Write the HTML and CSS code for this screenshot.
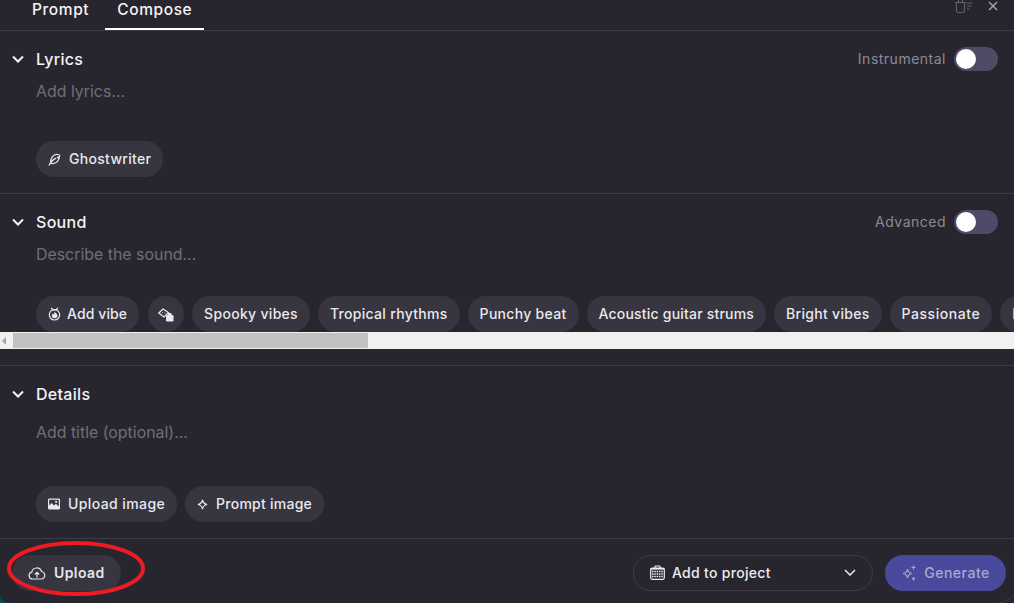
FILE: index.html
```html
<!DOCTYPE html>
<html lang="en">
<head>
<meta charset="utf-8">
<title>Compose</title>
<link rel="stylesheet" href="styles.css">
</head>
<body>
<main class="panel">
  <header class="tabs">
    <nav class="tablist">
      <span class="tab">Prompt</span>
      <span class="tab tab-active">Compose</span>
    </nav>
    <div class="tools">
      <svg class="tool-icon" width="18" height="14" viewBox="0 0 18 14" fill="none" stroke="currentColor" stroke-width="1.100"><path d="M0 2.500h11M1.200 2.500l.5 8.700q.1 1.300 1.300 1.300h5q1.200 0 1.300-1.300l.5-8.700M3.500 2.500V-1h4v3.500M12 3h5.500M12 6h4.500M12 9h2.500"/></svg>
      <svg class="close-icon" width="10" height="10" viewBox="0 0 10 10" fill="none" stroke="currentColor" stroke-width="1.400"><path d="M1 1l8 8M9 1L1 9"/></svg>
    </div>
  </header>

  <section class="section">
    <div class="head">
      <svg class="chev" width="12" height="8" viewBox="0 0 12 8" fill="none" stroke="currentColor" stroke-width="2"><path d="M1 1.500l5 5 5-5"/></svg>
      <h2 class="title">Lyrics</h2>
      <span class="switch-label">Instrumental</span>
      <span class="switch"><span class="knob"></span></span>
    </div>
    <p class="placeholder">Add lyrics...</p>
    <div class="chips">
      <span class="chip">
        <svg width="13" height="13" viewBox="0 0 14 14" fill="none" stroke="currentColor" stroke-width="1.300"><path d="M1 13.500C2.500 10 5 7.500 8.500 5.500M3 10.500C2.300 6.500 5 2 9 1.500c2-.2 3.700.7 3.700 1.700-.5 1-2 1.500-3.200 1.800 1.500.2 2.300.2 2.700.3-.8 2.700-2.700 5-5.200 5.700-1.500.5-3 .5-4-.5z"/></svg>
        Ghostwriter
      </span>
    </div>
  </section>

  <section class="section section-sound">
    <div class="head">
      <svg class="chev" width="12" height="8" viewBox="0 0 12 8" fill="none" stroke="currentColor" stroke-width="2"><path d="M1 1.500l5 5 5-5"/></svg>
      <h2 class="title">Sound</h2>
      <span class="switch-label">Advanced</span>
      <span class="switch"><span class="knob"></span></span>
    </div>
    <p class="placeholder">Describe the sound...</p>
    <div class="chips chips-scroll">
      <span class="chip chip-vibe">
        <svg width="13" height="14" viewBox="0 0 13 14" fill="none"><circle cx="6.500" cy="7.800" r="5.200" stroke="currentColor" stroke-width="1.200"/><path d="M3 1l2 1.800h3L10 1" stroke="currentColor" stroke-width="1.200"/><path d="M6.800 4.800c.2 1.200 2.700 1.800 2.700 4 0 1.500-1.300 2.500-2.900 2.500-1.700 0-2.800-1-2.800-2.500 0-1 .5-1.800 1.200-2.200 0 .7.400 1 .8 1 .5-.8.300-1.800 1-2.800z" fill="currentColor"/></svg>
        Add vibe
      </span>
      <span class="chip chip-icon">
        <svg width="16" height="14" viewBox="0 0 16 14" fill="none"><path d="M.8 5L5 1l5.500 3.500L6 9z" stroke="currentColor" stroke-width="1.200"/><rect x="8" y="7" width="7.500" height="6.500" rx="1.200" fill="currentColor"/><rect x="10" y="5" width="3.500" height="3" fill="currentColor"/><path d="M4 4.500h.8M6.500 5h.8" stroke="currentColor"/></svg>
      </span>
      <span class="chip">Spooky vibes</span>
      <span class="chip">Tropical rhythms</span>
      <span class="chip">Punchy beat</span>
      <span class="chip chip-tight">Acoustic guitar strums</span>
      <span class="chip">Bright vibes</span>
      <span class="chip chip-wide">Passionate</span>
      <span class="chip">Dreamy</span>
    </div>
    <div class="scrollbar">
      <span class="scroll-arrow"></span>
      <span class="scroll-thumb"></span>
    </div>
  </section>

  <section class="section section-details">
    <div class="head">
      <svg class="chev" width="12" height="8" viewBox="0 0 12 8" fill="none" stroke="currentColor" stroke-width="2"><path d="M1 1.500l5 5 5-5"/></svg>
      <h2 class="title">Details</h2>
    </div>
    <p class="placeholder">Add title (optional)...</p>
    <div class="chips">
      <span class="chip chip-mid">
        <svg width="12" height="12" viewBox="0 0 13 12"><path fill="currentColor" fill-rule="evenodd" d="M1.500 0h10A1.500 1.500 0 0 1 13 1.500v9a1.500 1.500 0 0 1-1.500 1.500h-10A1.500 1.500 0 0 1 0 10.500v-9A1.500 1.500 0 0 1 1.500 0zM1.300 1.300v6.400l2.700-2.700 2.500 2.500 2-1.700 3.200 2.800V1.300z"/><circle cx="8.800" cy="3.600" r="1.200" fill="currentColor"/></svg>
        Upload image
      </span>
      <span class="chip chip-prompt">
        <svg width="11" height="11" viewBox="0 0 12 12" fill="none" stroke="currentColor" stroke-width="1.300"><path d="M6 1c.5 3 2 4.500 5 5-3 .5-4.500 2-5 5-.5-3-2-4.500-5-5 3-.5 4.500-2 5-5z"/></svg>
        Prompt image
      </span>
    </div>
  </section>

  <footer class="footer">
    <span class="upload">
      <svg width="18" height="14" viewBox="0 0 18 14" fill="none" stroke="currentColor" stroke-width="1.200"><path d="M5 13H4.500A3.500 3.500 0 0 1 3.800 6.100 5 5 0 0 1 13.500 5.500 3.800 3.800 0 0 1 13.500 13H5zM9 11.500V6.500M6.800 8.500L9 6.300l2.200 2.200"/></svg>
      Upload
    </span>
    <div class="actions">
      <span class="project">
        <svg width="15" height="15" viewBox="0 0 15 15" fill="none" stroke="currentColor"><path d="M4.500 3L5.300 1h4.400l.8 2" stroke-width="1.200"/><rect x=".7" y="3" width="13.600" height="11.300" rx="1.500" stroke-width="1.200"/><path d="M.7 3.800h13.600" stroke-width="1.600"/><path d="M2 6.500h11M2 9h11M2 11.500h11" stroke-width="1.300" stroke-dasharray="1.500 .8"/></svg>
        <span class="project-name">Add to project</span>
        <svg class="project-chev" width="12" height="7" viewBox="0 0 12 7" fill="none" stroke="currentColor" stroke-width="1.500"><path d="M1 1l5 5 5-5"/></svg>
      </span>
      <span class="generate">
        <svg width="16" height="16" viewBox="0 0 16 16" fill="none" stroke="currentColor" stroke-width="1.200"><path d="M6.500 4c.5 3 1.500 4 4.500 4.500-3 .5-4 1.500-4.500 4.500C6 10 5 9 2 8.500 5 8 6 7 6.500 4z"/><path d="M12.500 0.500v4M10.500 2.500h4M12.500 12v3.500M11 13.700h3"/></svg>
        Generate
      </span>
    </div>
  </footer>

  <svg class="ring" width="140" height="58" viewBox="0 0 140 58" fill="none"><ellipse cx="70" cy="28.500" rx="67" ry="25.500" stroke="#ed1c24" stroke-width="4"/></svg>
  <svg class="corner-left" width="9" height="8" viewBox="0 0 9 8"><path d="M0 0c.5 4 3 7 9 8H0z" fill="#0c4a50"/></svg>
  <svg class="corner-right" width="16" height="8" viewBox="0 0 16 8" fill="none"><path d="M0 8C6 7 12 4 16 0" stroke="#3c3b45"/></svg>
</main>
</body>
</html>
```

FILE: styles.css
```css
* { box-sizing: border-box; }

html, body {
  margin: 0;
  height: 100%;
  overflow: hidden;
}

body {
  background: #27262f;
  color: #f4f4f6;
  font-family: Inter, "Liberation Sans", sans-serif;
}

.panel {
  position: relative;
  width: 1014px;
  height: 603px;
  display: flex;
  flex-direction: column;
  overflow: hidden;
}

.tabs {
  height: 31px;
  flex: none;
  display: flex;
  justify-content: space-between;
  border-bottom: 1px solid #3c3b45;
  padding: 0 16px 0 20px;
}

.tablist {
  display: flex;
  gap: 4px;
}

.tab {
  padding: 1px 12px 0;
  height: 30px;
  line-height: 18px;
  font-size: 15.500px;
  font-weight: 500;
  letter-spacing: 0.600px;
}

.tab-active {
  border-bottom: 2px solid #fff;
}

.tools {
  display: flex;
  gap: 13px;
  align-items: flex-start;
  color: #62616b;
}

.tool-icon {
  margin-right: 2px;
}

.close-icon {
  color: #a9a8b0;
  margin-top: 1px;
}

.section {
  height: 163px;
  flex: none;
  border-bottom: 1px solid #3c3b45;
  padding: 16px 16px 0 12px;
  display: flex;
  flex-direction: column;
}

.section-sound {
  height: 172px;
  padding-right: 0;
}

.section-details {
  height: 173px;
}

.head {
  display: flex;
  align-items: center;
  height: 24px;
}

.section-sound .head { padding-right: 16px; }

.chev {
  width: 12px;
  margin-right: 12px;
  flex: none;
}

.title {
  margin: 0;
  font-size: 16px;
  font-weight: 500;
  letter-spacing: 0.300px;
  flex: 1;
}

.switch-label {
  color: #8b8a94;
  font-size: 14px;
  letter-spacing: 0.500px;
  margin-right: 8px;
  padding-bottom: 1px;
}

.switch {
  width: 44px;
  height: 24px;
  border-radius: 12px;
  background: #4f4a66;
  display: flex;
  align-items: center;
  padding-left: 2px;
}

.knob {
  width: 20px;
  height: 20px;
  border-radius: 50%;
  background: #fff;
}

.placeholder {
  margin: 8px 0 0 24px;
  height: 24px;
  line-height: 26px;
  color: #6f6e78;
  font-size: 15.900px;
  flex: none;
}

.section-details .placeholder {
  margin-top: 14px;
}

.chips {
  margin: auto 0 16px 24px;
  display: flex;
  gap: 8px;
  flex: none;
}

.chips-scroll {
  margin-bottom: 0;
  overflow: hidden;
}

.chip {
  height: 36px;
  border-radius: 18px;
  background: #363540;
  padding: 0 12px 2px;
  display: inline-flex;
  align-items: center;
  gap: 8px;
  font-size: 14px;
  font-weight: 450;
  letter-spacing: 0.300px;
  color: #e9e9ed;
  white-space: nowrap;
  flex: none;
}

.chip svg {
  flex: none;
  margin-top: 2px;
}

.chip-vibe {
  margin-right: 1px;
  gap: 6px;
  letter-spacing: 0.100px;
}

.chip-icon {
  width: 36px;
  padding: 0;
  justify-content: center;
}

.chip-tight { letter-spacing: 0.200px; }

.chip-mid { letter-spacing: 0.400px; }

.chip-prompt { letter-spacing: 0.250px; }

.chip-wide { letter-spacing: 0.550px; }

.scrollbar {
  margin: 0 0 16px -12px;
  height: 17px;
  background: #f1f1f1;
  display: flex;
  align-items: center;
  flex: none;
}

.scroll-arrow {
  width: 0;
  height: 0;
  margin: 0 5px 0 2px;
  border-style: solid;
  border-width: 4px 4px 4px 0;
  border-color: transparent #a3a3a3 transparent transparent;
  flex: none;
}

.scroll-thumb {
  width: 355px;
  height: 15px;
  margin-left: 2px;
  background: #c1c1c1;
  flex: none;
}

.footer {
  flex: 1;
  display: flex;
  align-items: center;
  justify-content: space-between;
  padding: 3px 8px 0 12px;
}

.upload {
  height: 36px;
  border-radius: 18px;
  background: #363540;
  padding: 0 16px;
  display: inline-flex;
  align-items: center;
  gap: 8px;
  font-size: 14px;
  font-weight: 600;
  letter-spacing: 0.400px;
  color: #e6e6ea;
}

.actions {
  display: flex;
  gap: 12px;
}

.project {
  width: 240px;
  height: 36px;
  border: 1px solid #3c3b45;
  border-radius: 18px;
  padding: 0 16px;
  display: flex;
  align-items: center;
  gap: 7px;
  font-size: 14px;
  font-weight: 450;
  letter-spacing: 0.300px;
  color: #ececf0;
}

.project-name { flex: 1; }

.generate {
  width: 121px;
  height: 36px;
  border-radius: 18px;
  background: #494a9c;
  color: #a8a8cf;
  display: flex;
  align-items: center;
  justify-content: center;
  gap: 7px;
  font-size: 14px;
  font-weight: 500;
  letter-spacing: 0.500px;
}

.ring {
  position: absolute;
  left: 6px;
  top: 540px;
}

.corner-left {
  position: absolute;
  left: 0;
  bottom: 0;
}

.corner-right {
  position: absolute;
  right: 0;
  bottom: 0;
}
```
